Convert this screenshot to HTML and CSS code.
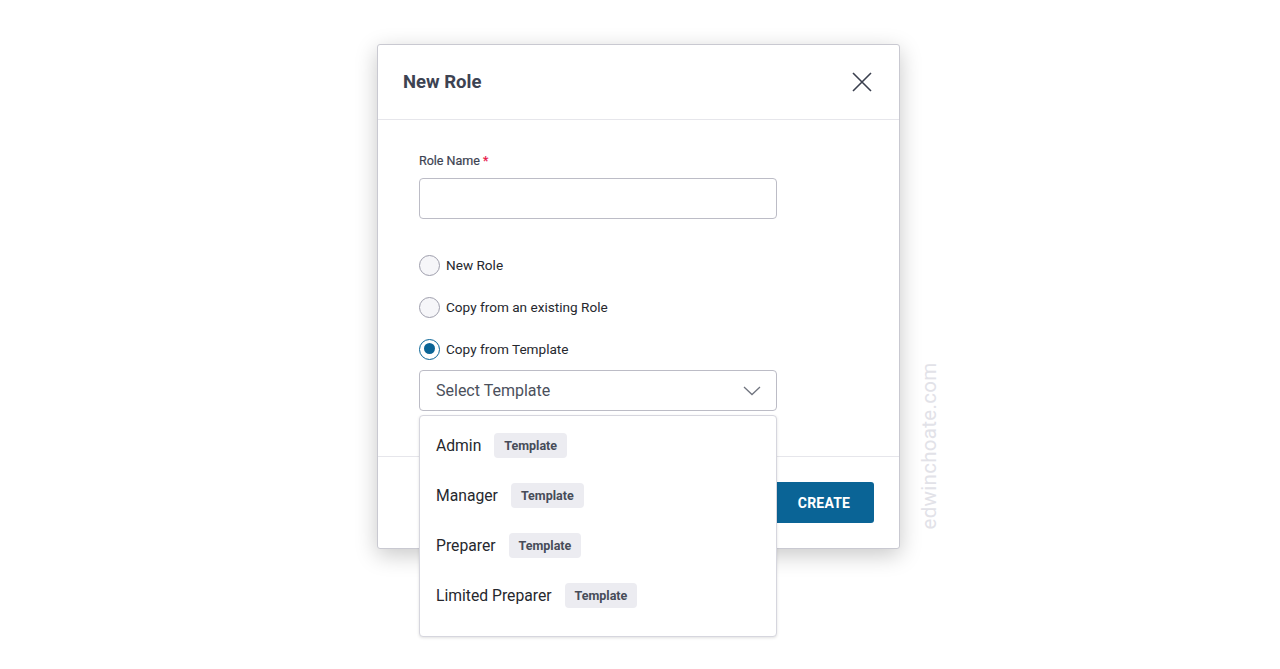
FILE: index.html
```html
<!DOCTYPE html>
<html>
<head>
<meta charset="utf-8">
<link rel="stylesheet" href="styles.css">
</head>
<body>
<div class="page">
  <div class="dialog">
    <div class="dialog-header">
      <h2 class="dialog-title">New Role</h2>
      <button class="close-btn" aria-label="Close">
        <svg width="20" height="20" viewBox="0 0 20 20"><path d="M1 1L19 19M19 1L1 19" stroke="#3a3f4e" stroke-width="1.6" fill="none"/></svg>
      </button>
    </div>
    <div class="dialog-body">
      <label class="field-label">Role Name<span class="req">*</span></label>
      <div class="text-input"></div>
      <div class="radios">
        <div class="radio-row"><span class="radio"></span><span class="radio-label">New Role</span></div>
        <div class="radio-row"><span class="radio"></span><span class="radio-label">Copy from an existing Role</span></div>
        <div class="radio-row"><span class="radio checked"></span><span class="radio-label">Copy from Template</span></div>
      </div>
      <div class="select-wrap">
        <div class="select">
          <span class="select-text">Select Template</span>
          <svg class="chev" width="18" height="10" viewBox="0 0 18 10"><path d="M1 1L9 8.5L17 1" stroke="#70747f" stroke-width="1.3" fill="none"/></svg>
        </div>
        <div class="menu">
          <div class="menu-item"><span class="item-name">Admin</span><span class="badge">Template</span></div>
          <div class="menu-item"><span class="item-name">Manager</span><span class="badge">Template</span></div>
          <div class="menu-item"><span class="item-name">Preparer</span><span class="badge">Template</span></div>
          <div class="menu-item"><span class="item-name">Limited Preparer</span><span class="badge">Template</span></div>
        </div>
      </div>
    </div>
    <div class="dialog-footer">
      <button class="btn-create">CREATE</button>
    </div>
  </div>
  <div class="watermark">edwinchoate.com</div>
</div>
</body>
</html>
```

FILE: styles.css
```css
* { box-sizing: border-box; }
html, body { margin: 0; padding: 0; background: #ffffff; }
body { font-family: Roboto, "Liberation Sans", sans-serif; color: #222; }

.page {
  position: relative;
  width: 1280px;
  height: 669px;
  padding: 44px 0 0 377px;
}

.dialog {
  width: 523px;
  height: 505px;
  background: #fff;
  border: 1px solid #c9c9d1;
  border-radius: 3px;
  box-shadow: 0 6px 22px rgba(0, 0, 0, 0.22);
  display: flex;
  flex-direction: column;
}

.dialog-header {
  height: 75px;
  border-bottom: 1px solid #e6e6eb;
  display: flex;
  align-items: center;
  justify-content: space-between;
  padding: 0 27px 0 25px;
  flex-shrink: 0;
}
.dialog-title {
  margin: 0;
  font-size: 18.5px;
  font-weight: 700;
  color: #3d4352;
}
.close-btn {
  border: 0;
  background: none;
  padding: 0;
  width: 20px;
  height: 20px;
  display: flex;
  margin-top: -1px;
}

.dialog-body {
  flex: 1;
  padding: 33px 0 0 41px;
  display: flex;
  flex-direction: column;
}
.field-label {
  font-size: 12.5px;
  font-weight: 400;
  color: #3d4352;
  line-height: 16px;
  -webkit-text-stroke: 0.2px #3d4352;
}
.req { color: #e8174a; margin-left: 3px; -webkit-text-stroke: 0.2px #e8174a; }

.text-input {
  margin-top: 9px;
  width: 358px;
  height: 41px;
  border: 1px solid #bcbcc6;
  border-radius: 4px;
}

.radios {
  margin-top: 35px;
  display: flex;
  flex-direction: column;
  gap: 20px;
}
.radio-row {
  display: flex;
  align-items: center;
  height: 22px;
}
.radio {
  width: 21px;
  height: 21px;
  border-radius: 50%;
  border: 1px solid #9e9eac;
  background: #f6f6f9;
  margin-right: 6px;
  position: relative;
}
.radio.checked {
  border: 1.5px solid #0a6496;
  background: #fff;
}
.radio.checked::after {
  content: "";
  position: absolute;
  left: 3.5px;
  top: 3.5px;
  width: 11px;
  height: 11px;
  border-radius: 50%;
  background: #0a6496;
}
.radio-label {
  font-size: 13.6px;
  color: #26282e;
}

.select-wrap {
  position: relative;
  margin-top: 10px;
  width: 358px;
}
.select {
  height: 41px;
  border: 1px solid #bcbcc6;
  border-radius: 4px;
  display: flex;
  align-items: center;
  justify-content: space-between;
  padding: 0 15px 0 16px;
}
.select-text {
  font-size: 16px;
  color: #4b505c;
}
.chev { margin-top: 1px; }

.menu {
  position: absolute;
  left: 0;
  top: 45px;
  width: 358px;
  height: 222px;
  background: #fff;
  border: 1px solid #d6d6de;
  border-radius: 4px;
  box-shadow: 0 1px 3px rgba(0, 0, 0, 0.12);
  padding: 4px 0 0 16px;
  z-index: 5;
}
.menu-item {
  height: 50px;
  display: flex;
  align-items: center;
  gap: 13px;
}
.item-name {
  font-size: 15.7px;
  color: #26282e;
}
.badge {
  background: #ececf1;
  border-radius: 4px;
  font-size: 12.5px;
  font-weight: 700;
  color: #474c59;
  height: 25px;
  line-height: 25px;
  padding: 0 10px;
}

.dialog-footer {
  height: 92px;
  border-top: 1px solid #e6e6eb;
  display: flex;
  align-items: center;
  justify-content: flex-end;
  padding: 0 25px 0 0;
  flex-shrink: 0;
}
.btn-create {
  width: 120px;
  height: 41px;
  border: 0;
  border-radius: 3px;
  background: #0a6496;
  color: #fff;
  font-family: Roboto, "Liberation Sans", sans-serif;
  font-size: 14px;
  font-weight: 700;
  letter-spacing: 0.2px;
  padding-left: 26px;
}

.watermark {
  position: absolute;
  left: 929px;
  top: 446px;
  transform: translate(-50%, -50%) rotate(-90deg);
  font-size: 20.5px;
  font-weight: 400;
  color: #e2e2e8;
  white-space: nowrap;
  letter-spacing: 0.3px;
}
```
